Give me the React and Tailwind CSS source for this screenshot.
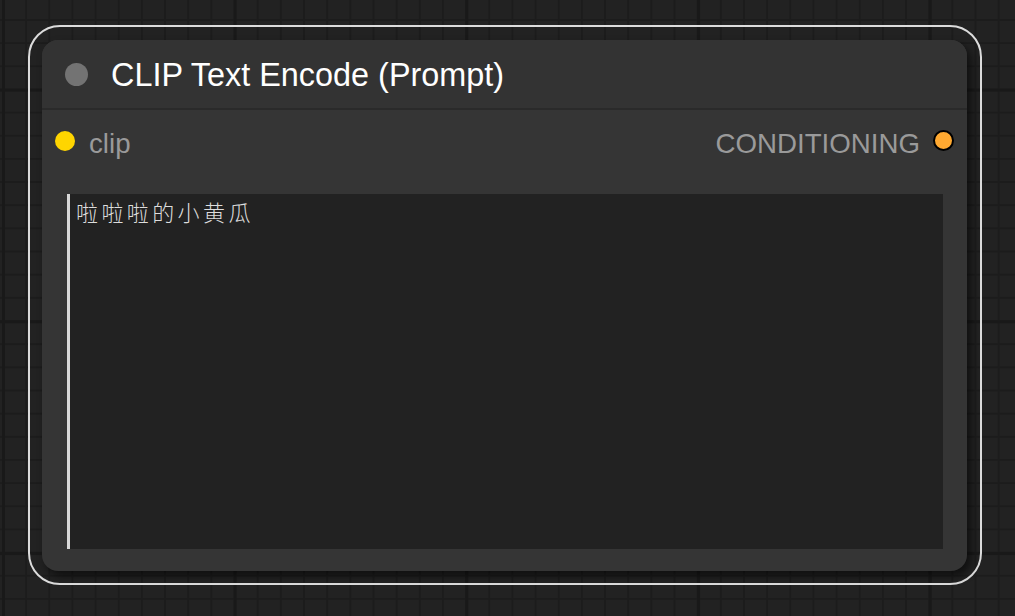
export default function App() {
  return (
    <div
      className="relative w-[1015px] h-[616px] overflow-hidden bg-[#222222] pt-[25px] pl-[28px] box-border bg-[linear-gradient(to_right,#191919_3px,transparent_3px),linear-gradient(to_bottom,#191919_3px,transparent_3px),linear-gradient(to_right,#1c1c1c_2px,transparent_2px),linear-gradient(to_bottom,#1c1c1c_2px,transparent_2px)] bg-[size:231.7px_231.7px,231.7px_231.7px,23.17px_23.17px,23.17px_23.17px] bg-[position:2px_-143px,2px_-143px,2px_19px,2px_19px]"
      style={{ fontFamily: '"Liberation Sans", Arial, sans-serif' }}
    >
      <div className="w-[954px] h-[560px] box-border border-2 border-[#dcdcdc] rounded-[32px] pt-[13px] pl-[12px]">
        <div className="w-[925px] h-[531px] bg-[#353535] rounded-[16px] shadow-[4px_5px_8px_rgba(0,0,0,0.55)] flex flex-col overflow-hidden">
          <div className="h-[68px] bg-[#333333] flex items-center pl-[23px] shrink-0">
            <div className="w-[23px] h-[23px] rounded-full bg-[#737373]" />
            <div className="ml-[23px] text-white text-[32.4px] leading-none pt-[2px]">CLIP Text Encode (Prompt)</div>
          </div>
          <div className="h-[2px] bg-[#2a2a2a] shrink-0" />
          <div className="h-[62px] flex items-center justify-between pl-[13px] pr-[13px] shrink-0">
            <div className="flex items-center">
              <div className="w-[20px] h-[20px] rounded-full bg-[#ffd500]" />
              <div className="ml-[14px] text-[#9a9a9a] text-[27.7px] leading-none pt-[5px]">clip</div>
            </div>
            <div className="flex items-center">
              <div className="text-[#9a9a9a] text-[27.7px] leading-none pt-[5px]">CONDITIONING</div>
              <div className="ml-[13px] w-[21px] h-[21px] rounded-full bg-[#ffa931] border-2 border-black box-border" />
            </div>
          </div>
          <div className="mt-[22px] ml-[25px] w-[876px] h-[355px] bg-[#222222] border-l-[3px] border-[#d8d8d8] box-border pl-[6px] pt-[4px]">
            <div
              className="text-[#dddddd] text-[22px] leading-[26px] tracking-[3.4px]"
              style={{ fontFamily: '"Noto Sans CJK SC", "Noto Sans CJK JP", sans-serif', fontWeight: 300 }}
            >
              啦啦啦的小黄瓜
            </div>
          </div>
        </div>
      </div>
    </div>
  );
}
